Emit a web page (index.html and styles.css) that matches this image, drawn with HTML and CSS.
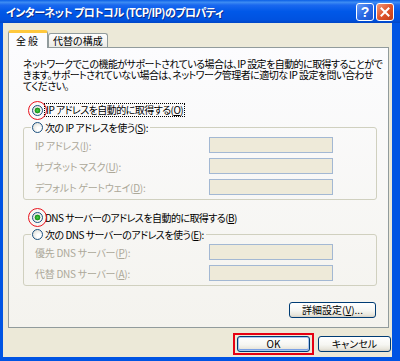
FILE: index.html
```html
<!DOCTYPE html>
<html>
  <head>
    <meta charset="UTF-8">
    <title>インターネット プロトコル (TCP/IP)のプロパティ</title>
    <link rel="stylesheet" href="styles.css">
  </head>
  <body>
    <div class="window">
      <div class="titlebar">
        <span class="title">インターネット プロトコル (TCP/IP)のプロパティ</span>
        <div class="caption">
          <span class="cap-btn cap-help">?</span>
          <span class="cap-btn cap-close">
            <svg width="10" height="10" viewBox="0 0 10 10">
              <path d="M1.5 1.5 L8.5 8.5 M8.5 1.5 L1.5 8.5" stroke="#fff" stroke-width="2" stroke-linecap="square"/>
            </svg>
          </span>
        </div>
      </div>

      <div class="client">
        <div class="tabs">
          <div class="tab tab-active">全般</div>
          <div class="tab">代替の構成</div>
        </div>

        <div class="panel">
          <p class="desc">ネットワークでこの機能がサポートされている場合は、IP 設定を自動的に取得することがで<br>きます。サポートされていない場合は、ネットワーク管理者に適切な IP 設定を問い合わせ<br>てください。</p>

          <div class="radio-row row-ip">
            <span class="radio checked marked"></span>
            <span class="focus">IP アドレスを自動的に取得する(<u>O</u>)</span>
          </div>

          <fieldset class="group">
            <legend class="legend">
              <span class="radio"></span>
              <span>次の IP アドレスを使う(<u>S</u>):</span>
            </legend>
            <div class="fields">
              <span class="off">IP アドレス(<u>I</u>):</span><span class="input"></span>
              <span class="off">サブネット マスク(<u>U</u>):</span><span class="input"></span>
              <span class="off">デフォルト ゲートウェイ(<u>D</u>):</span><span class="input"></span>
            </div>
          </fieldset>

          <div class="radio-row row-dns">
            <span class="radio checked marked"></span>
            <span>DNS サーバーのアドレスを自動的に取得する(<u>B</u>)</span>
          </div>

          <fieldset class="group">
            <legend class="legend">
              <span class="radio"></span>
              <span>次の DNS サーバーのアドレスを使う(<u>E</u>):</span>
            </legend>
            <div class="fields">
              <span class="off">優先 DNS サーバー(<u>P</u>):</span><span class="input"></span>
              <span class="off">代替 DNS サーバー(<u>A</u>):</span><span class="input"></span>
            </div>
          </fieldset>

          <div class="adv-row">
            <button class="btn btn-adv">詳細設定(<u>V</u>)...</button>
          </div>
        </div>

        <div class="footer">
          <button class="btn btn-default annotate">OK</button>
          <button class="btn">キャンセル</button>
        </div>
      </div>
    </div>
  </body>
</html>
```

FILE: styles.css
```css
* {
  box-sizing: border-box;
}
body {
  margin: 0;
  font-family: "Noto Sans CJK JP", sans-serif;
  font-size: 10px;
  font-feature-settings: "palt";
  letter-spacing: -0.25px;
  color: #000;
}
u {
  text-decoration: underline;
  text-underline-offset: 1px;
}
.window {
  width: 400px;
  height: 361px;
  display: flex;
  flex-direction: column;
  background: #0054e3;
}

/* title bar */
.titlebar {
  height: 23px;
  flex: none;
  display: flex;
  align-items: center;
  justify-content: space-between;
  padding: 0 6px;
  background: linear-gradient(#0a5fe6 0%, #3d8cf3 10%, #1a68ef 22%, #0058e8 50%, #0052e0 85%, #0046c6 100%);
}
.title {
  color: #fff;
  font-weight: bold;
  font-size: 11px;
  letter-spacing: -0.55px;
  text-shadow: 1px 1px 0 #0b2c8c;
  white-space: nowrap;
}
.caption {
  display: flex;
  gap: 2px;
}
.cap-btn {
  width: 18px;
  height: 18px;
  border: 1px solid #fff;
  border-radius: 3px;
  display: flex;
  align-items: center;
  justify-content: center;
}
.cap-help {
  background: linear-gradient(135deg, #6c9ef6 0%, #2c6be6 50%, #1c53cc 100%);
  color: #fff;
  font: bold 14px "Liberation Sans", sans-serif;
}
.cap-close {
  background: linear-gradient(135deg, #f29a7c 0%, #e0552c 50%, #c23c16 100%);
}

/* client area */
.client {
  flex: 1;
  background: #ece9d8;
  margin: 0 8px 4px 3px;
  padding: 7px 1px 0 5px;
  display: flex;
  flex-direction: column;
}
.tabs {
  display: flex;
  align-items: flex-end;
  height: 17px;
}
.tab {
  height: 14px;
  padding: 0 4px;
  border: 1px solid #919b9c;
  border-bottom: none;
  border-radius: 3px 3px 0 0;
  background: linear-gradient(#fefefe, #ecebe6);
  display: flex;
  align-items: center;
  white-space: nowrap;
  letter-spacing: 0;
}
.tab-active {
  height: 18px;
  padding: 0 7px;
  margin-bottom: -1px;
  border-top: 3px solid #ffc83c;
  background: #fcfcfe;
  position: relative;
  z-index: 1;
  letter-spacing: 2px;
}
.panel {
  margin-right: 2px;
  border: 1px solid #919b9c;
  background: linear-gradient(#fcfcfe, #f4f3ee);
  padding: 10px 11px 9px 14px;
}
.desc {
  margin: 0;
  line-height: 11px;
  letter-spacing: -0.55px;
  white-space: nowrap;
}

/* radios */
.radio-row {
  display: flex;
  align-items: center;
  gap: 2px;
  height: 14px;
  padding-left: 9px;
  white-space: nowrap;
  letter-spacing: -0.55px;
}
.row-ip {
  margin-top: 12px;
}
.row-dns {
  margin-top: 10px;
}
.radio {
  width: 11px;
  height: 11px;
  flex: none;
  border: 1px solid #1c5180;
  border-radius: 50%;
  background: radial-gradient(circle at 65% 65%, #ffffff 20%, #e6e6e0 70%, #d0d0c8 100%);
  position: relative;
}
.checked {
  background: radial-gradient(circle at 50% 50%, #4ccb4c 0, #21a121 2px, #1b8d1b 2.6px, transparent 3.2px),
    radial-gradient(circle at 65% 65%, #ffffff 20%, #e6e6e0 70%, #d0d0c8 100%);
}
.marked::after {
  content: "";
  position: absolute;
  inset: -5px;
  border: 1.5px solid #e8141e;
  border-radius: 50%;
}
.focus {
  outline: 1px dotted #000;
  padding: 0 1px;
  line-height: 12px;
}

/* group boxes */
.group {
  margin: 3px 0 0;
  border: 1px solid #d0d0bf;
  border-radius: 3px;
  padding: 3px 10px 4px 11px;
  min-width: 0;
}
.legend {
  display: flex;
  align-items: center;
  gap: 2px;
  height: 14px;
  padding: 0 2px 0 1px;
  margin-left: -4px;
  white-space: nowrap;
  letter-spacing: -0.5px;
}
.fields {
  display: grid;
  grid-template-columns: 174px 124px;
  grid-auto-rows: 16px;
  row-gap: 5px;
  align-items: center;
}
.off {
  color: #aca899;
  white-space: nowrap;
}
.input {
  height: 16px;
  border: 1px solid #a3b8d3;
  background: #eeead9;
}

/* buttons */
.adv-row {
  display: flex;
  justify-content: flex-end;
  margin-top: 16px;
  padding-right: 1px;
}
.btn {
  height: 16px;
  width: 73px;
  padding: 0;
  border: 1px solid #003c74;
  border-radius: 3px;
  background: linear-gradient(#ffffff 0%, #f6f6f2 55%, #e8e6dc 85%, #d6d0c5 100%);
  font-family: "Noto Sans CJK JP", sans-serif;
  font-size: 10px;
  font-feature-settings: "palt";
  color: #000;
  line-height: 14px;
  position: relative;
}
.btn-adv {
  width: 87px;
}
.btn-default {
  box-shadow: inset 0 0 0 1px #a9c4f0, inset 0 -1px 0 1px #7aa0e4;
}
.annotate::after {
  content: "";
  position: absolute;
  inset: -4px -5px;
  border: 2px solid #e60012;
}
.footer {
  display: flex;
  justify-content: flex-end;
  gap: 8px;
  margin-top: 8px;
}
```
